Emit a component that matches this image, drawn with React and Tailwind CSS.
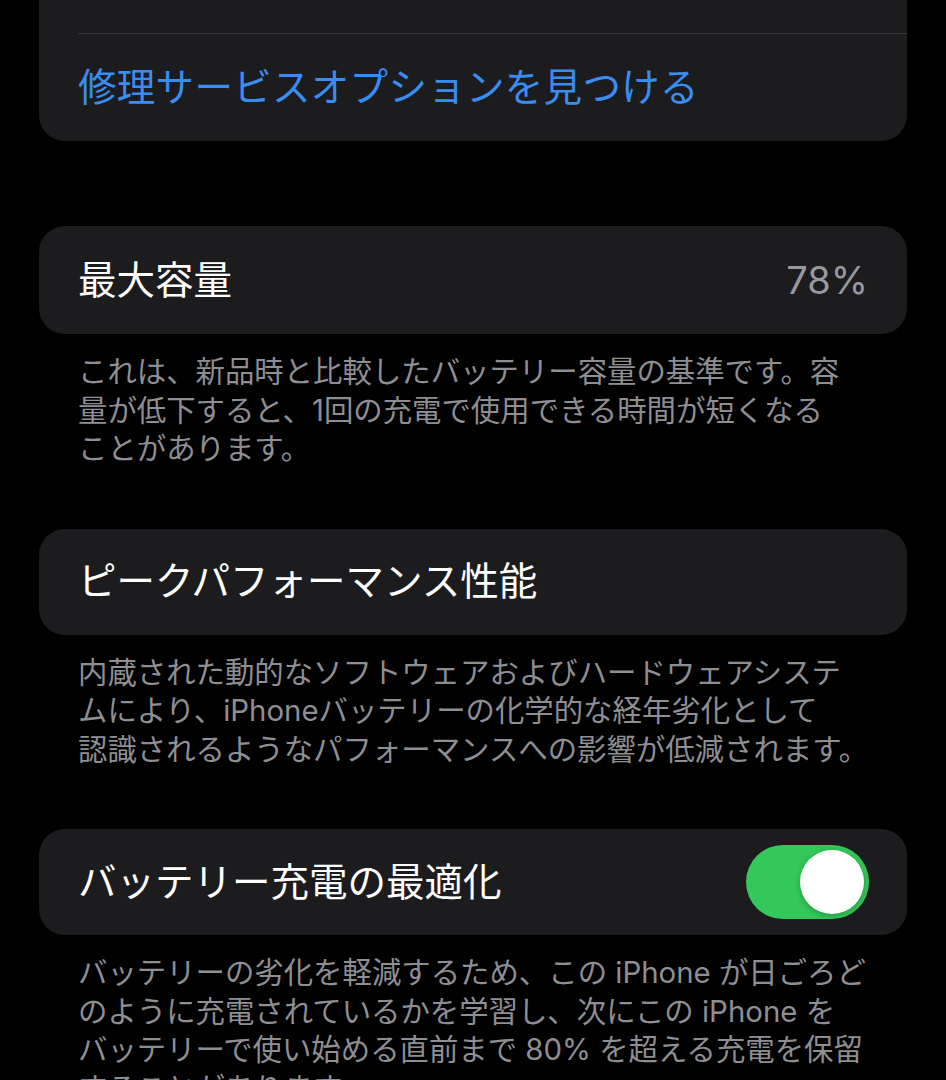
import React, { useState } from 'react'

const Footer = ({ lines }) => (
    <div className="px-[78px] pt-[19px] pb-[60px] text-[29.4px] leading-[38.5px] text-[#8e8e93]">
        {lines.map((line, i) => (
            <div key={i} className="whitespace-nowrap">{line}</div>
        ))}
    </div>
)

const Toggle = ({ on, onChange }) => (
    <button
        onClick={() => onChange(!on)}
        className={`flex h-[74px] w-[123px] items-center rounded-full p-[5px] ${on ? 'justify-end bg-[#34c759]' : 'justify-start bg-[#39393d]'}`}
    >
        <span className="block h-[64px] w-[64px] rounded-full bg-white shadow-[0_2px_6px_rgba(0,0,0,0.25)]" />
    </button>
)

const App = () => {
    const [optimized, setOptimized] = useState(true)

    return (
        <div className="h-[1080px] w-[946px] overflow-hidden bg-black font-[Inter,'Noto_Sans_CJK_JP',sans-serif] text-white">
            {/* 修理サービス */}
            <div className="mx-[39px] -mt-[120px] rounded-b-[26px] bg-[#1c1c1e] pl-[39px]">
                <div className="flex h-[153px] items-end pb-[36px] pr-[39px] text-[30px] leading-[40px] text-[#e5e5ea]">
                    <p className="whitespace-nowrap">Apple正規サービスプロバイダで交換できます。</p>
                </div>
                <div className="h-px bg-[#38383a]" />
                <div className="flex h-[107px] items-center">
                    <a href="#" className="text-[38.5px] leading-none tracking-[0.3px] text-[#3a8df0]">修理サービスオプションを見つける</a>
                </div>
            </div>

            {/* 最大容量 */}
            <div className="mx-[39px] mt-[85px] flex h-[108px] items-center justify-between rounded-[26px] bg-[#1c1c1e] px-[39px]">
                <span className="text-[38.5px] leading-none">最大容量</span>
                <span className="text-[38px] leading-none text-[#98989e]">78%</span>
            </div>
            <Footer
                lines={[
                    'これは、新品時と比較したバッテリー容量の基準です。容',
                    '量が低下すると、1回の充電で使用できる時間が短くなる',
                    'ことがあります。',
                ]}
            />

            {/* ピークパフォーマンス */}
            <div className="mx-[39px] flex h-[106px] items-center rounded-[26px] bg-[#1c1c1e] px-[39px]">
                <span className="text-[38.5px] leading-none">ピークパフォーマンス性能</span>
            </div>
            <Footer
                lines={[
                    '内蔵された動的なソフトウェアおよびハードウェアシステ',
                    'ムにより、iPhoneバッテリーの化学的な経年劣化として',
                    '認識されるようなパフォーマンスへの影響が低減されます。',
                ]}
            />

            {/* 最適化 */}
            <div className="mx-[39px] flex h-[106px] items-center justify-between rounded-[26px] bg-[#1c1c1e] pl-[39px] pr-[38px]">
                <span className="text-[38.5px] leading-none">バッテリー充電の最適化</span>
                <Toggle on={optimized} onChange={setOptimized} />
            </div>
            <Footer
                lines={[
                    'バッテリーの劣化を軽減するため、この iPhone が日ごろど',
                    'のように充電されているかを学習し、次にこの iPhone を',
                    'バッテリーで使い始める直前まで 80% を超える充電を保留',
                    'することがあります。',
                ]}
            />
        </div>
    )
}

export default App
